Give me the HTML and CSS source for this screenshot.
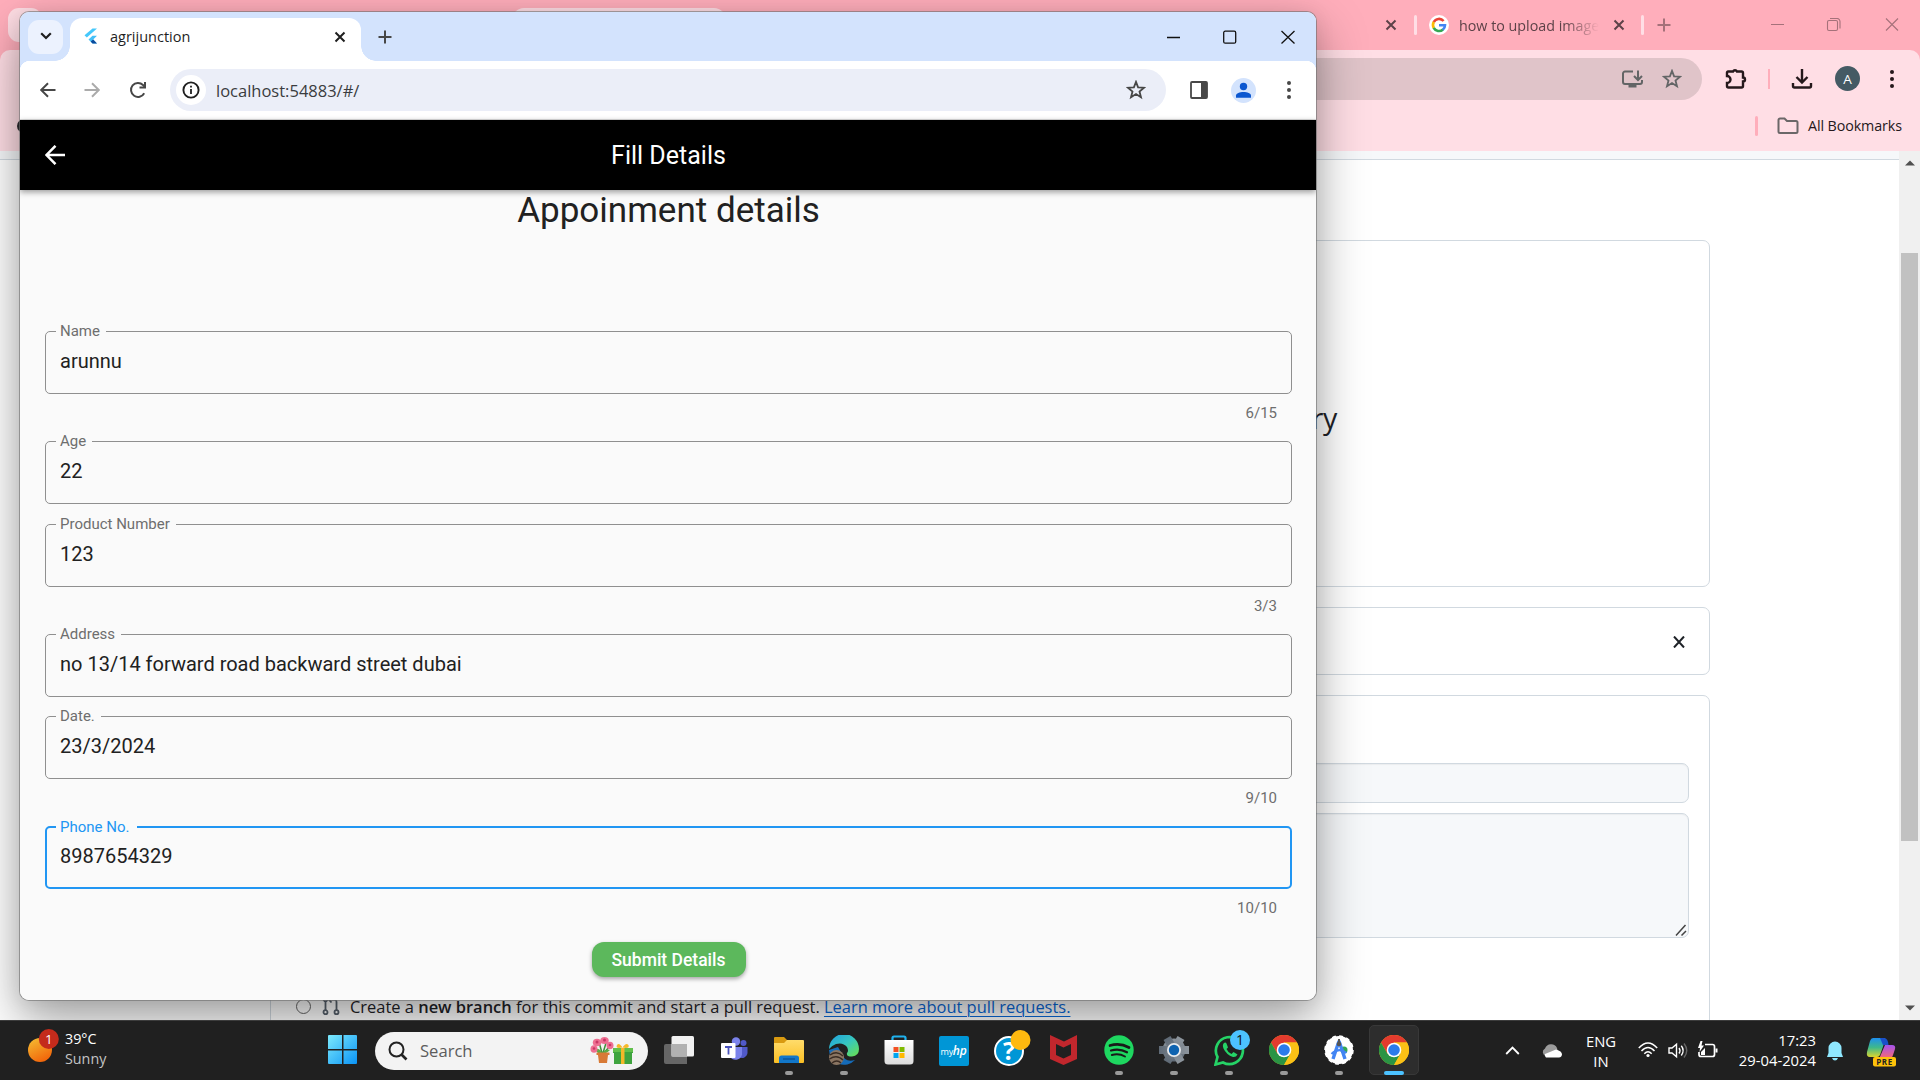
FILE: index.html
```html
<!DOCTYPE html>
<html lang="en">
<head>
<meta charset="utf-8">
<title>agrijunction</title>
<link rel="stylesheet" href="styles.css">
</head>
<body>
<svg class="defs" width="0" height="0">
  <defs>
    <linearGradient id="sun" x1="0" y1="0" x2=".5" y2="1"><stop offset="0" stop-color="#f5c033"/><stop offset="1" stop-color="#f2680c"/></linearGradient>
    <linearGradient id="win" x1="0" y1="0" x2="1" y2="1"><stop offset="0" stop-color="#7deafd"/><stop offset="1" stop-color="#0a93f5"/></linearGradient>
    <linearGradient id="folder" x1="0" y1="0" x2="0" y2="1"><stop offset="0" stop-color="#ffdc6b"/><stop offset="1" stop-color="#fbbf24"/></linearGradient>
    <linearGradient id="edge" x1="0" y1="0" x2="1" y2="1"><stop offset="0" stop-color="#1f9fe0"/><stop offset=".5" stop-color="#36c6c0"/><stop offset="1" stop-color="#6be04a"/></linearGradient>
    <linearGradient id="store" x1="0" y1="0" x2="0" y2="1"><stop offset="0" stop-color="#fff"/><stop offset="1" stop-color="#dcdcdc"/></linearGradient>
    <linearGradient id="gear" x1="0" y1="0" x2="0" y2="1"><stop offset="0" stop-color="#8d959d"/><stop offset="1" stop-color="#5f6a76"/></linearGradient>
    <linearGradient id="cop1" x1="0" y1="0" x2="0" y2="1"><stop offset="0" stop-color="#1e8ff0"/><stop offset=".5" stop-color="#3fb98a"/><stop offset="1" stop-color="#d9d52f"/></linearGradient>
    <linearGradient id="cop2" x1="0" y1="0" x2="0" y2="1"><stop offset="0" stop-color="#a452ee"/><stop offset="1" stop-color="#fb6a6a"/></linearGradient>
    <symbol id="chrome" viewBox="0 0 30 30">
      <circle cx="15" cy="15" r="15" fill="#fbc116"/>
      <path d="M15 7.5H28A15 15 0 0 0 2 7.5L8.5 18.8Z" fill="#e33b2e"/>
      <path d="M2 7.5A15 15 0 0 0 15 30L21.5 18.7 15 15 8.5 18.8Z" fill="#2a9444"/>
      <path d="M15 30A15 15 0 0 0 28 7.5H15L21.5 18.7Z" fill="#fbc116"/>
      <circle cx="15" cy="15" r="7.3" fill="#fff"/><circle cx="15" cy="15" r="5.8" fill="#2b7bea"/>
    </symbol>
    <symbol id="star" viewBox="0 0 20 20"><path d="M10 1.9 12.1 7.3 18 7.7 13.5 11.5 15 17.3 10 14.1 5 17.3 6.5 11.5 2 7.7 7.9 7.3Z" fill="none" stroke="currentColor" stroke-width="1.8"/></symbol>
    <symbol id="dots" viewBox="0 0 10 20"><g fill="currentColor"><circle cx="5" cy="3" r="2"/><circle cx="5" cy="10" r="2"/><circle cx="5" cy="17" r="2"/></g></symbol>
    <symbol id="cross" viewBox="0 0 12 12"><path d="M1.5 1.5 10.5 10.5M10.5 1.5 1.5 10.5" stroke="currentColor" stroke-width="2" fill="none"/></symbol>
    <symbol id="plus" viewBox="0 0 14 14"><path d="M7 .5V13.5M.5 7H13.5" stroke="currentColor" stroke-width="2" fill="none"/></symbol>
    <symbol id="arrow" viewBox="0 0 20 20"><path d="M17.5 10H3.5M10 3.2 3.2 10 10 16.8" stroke="currentColor" stroke-width="2" fill="none"/></symbol>
  </defs>
</svg>

<div class="desktop">
  <section class="back-window">
    <div class="back-tabs">
      <span class="back-search"></span>
      <span class="back-active-tab"></span>
      <svg class="bt-close1" width="12" height="12"><use href="#cross"/></svg>
      <i class="tab-sep"></i>
      <svg class="google" width="20" height="20" viewBox="0 0 20 20"><circle cx="10" cy="10" r="10" fill="#fff"/><g fill="none" stroke-width="2.6"><path d="M14.6 6A6 6 0 0 0 4.7 7.2" stroke="#ea4335"/><path d="M4.8 7A6 6 0 0 0 4.8 13" stroke="#fbbc05"/><path d="M4.7 12.8A6 6 0 0 0 14 14.5" stroke="#34a853"/><path d="M10 10.2H16A6 6 0 0 1 13.8 14.7" stroke="#4285f4"/></g></svg>
      <span class="bt-title">how to upload image</span>
      <svg class="bt-close2" width="12" height="12"><use href="#cross"/></svg>
      <i class="tab-sep sep2"></i>
      <svg class="bt-plus" width="14" height="14"><use href="#plus"/></svg>
      <svg class="bt-controls" width="128" height="14" viewBox="0 0 128 14" fill="none" stroke="#a5717a" stroke-width="1.1"><path d="M0 6.500H13M115 .5 127 12.500M127 .5 115 12.500"/><rect x="56.5" y="2.500" width="10" height="10" rx="1.5"/><path d="M59 .5H66A3 3 0 0 1 69 3.500V10.500"/></svg>
    </div>
    <div class="back-toolbar">
      <div class="back-nav">
        <div class="back-omnibox">
          <svg width="22" height="20" viewBox="0 0 22 20" fill="none" stroke="#636566" stroke-width="2"><path d="M12 2.5H4A2 2 0 0 0 2 4.500V13A2 2 0 0 0 4 15H19A2 2 0 0 0 21 13V11M17 1.500V10M13 7 17 11 21 7"/><path d="M7.500 17H15.500" stroke-width="3"/></svg>
          <svg width="20" height="20" color="#636566"><use href="#star"/></svg>
        </div>
        <svg class="ext" width="22" height="22" viewBox="0 0 22 22"><path d="M3 3.500H8A2.200 2.200 0 0 1 12 3.500H16.500A1.500 1.500 0 0 1 18 5V9.500A2 2 0 0 1 18 13.500V18A1.500 1.500 0 0 1 16.500 19.500H3.500A1.500 1.500 0 0 1 2 18V15A3.500 3.500 0 0 0 2 8V4.500A1 1 0 0 1 3 3.500Z" fill="none" stroke="#25181b" stroke-width="2.400"/></svg>
        <i class="nav-sep"></i>
        <svg class="dl" width="22" height="20" viewBox="0 0 22 20" fill="none" stroke="#25181b" stroke-width="2.400"><path d="M11 0V13M5.500 8 11 13.500 16.500 8M2 14V17A1.500 1.500 0 0 0 3.500 18.500H18.500A1.500 1.500 0 0 0 20 17V14"/></svg>
        <span class="avatar">A</span>
        <svg class="bdots" width="10" height="20"><use href="#dots"/></svg>
      </div>
      <div class="bookmarks">
        <svg class="globe" width="16" height="16" viewBox="0 0 16 16"><circle cx="8" cy="8" r="7" fill="#2b2b2e"/></svg>
        <i class="bm-sep"></i>
        <svg width="22" height="18" viewBox="0 0 22 18"><path d="M1.500 14.500V3A1.500 1.500 0 0 1 3 1.500H7.500L10 4H19A1.500 1.500 0 0 1 20.500 5.500V14.500A1.500 1.500 0 0 1 19 16H3A1.500 1.500 0 0 1 1.500 14.500Z" fill="none" stroke="#6b6768" stroke-width="2"/></svg>
        <span class="bm-text">All Bookmarks</span>
      </div>
    </div>
    <div class="back-body">
      <main class="repo">
        <div class="repo-head"></div>
        <div class="repo-col">
          <div class="card drop"><h2>ry</h2></div>
          <div class="card file"><svg width="12" height="12" viewBox="0 0 12 12"><path d="M1 .5 11 11.500M11 .5 1 11.500" stroke="#1f2328" stroke-width="2"/></svg></div>
          <div class="card commit">
            <div class="input"></div>
            <div class="textarea"><svg width="12" height="12" viewBox="0 0 12 12"><path d="M1 11.500 10.500 1M6.500 11.500 11 7" stroke="#444" stroke-width="1.500"/></svg></div>
            <div class="branch-row">
              <span class="radio"></span>
              <svg width="20" height="20" viewBox="0 0 20 20" fill="none" stroke="#59636e" stroke-width="1.800"><path d="M4.500 5V14M8 3.500H13A2.500 2.500 0 0 1 15.500 6V14M10.500 .5 7.800 3.500 10.500 6.500"/><circle cx="4.500" cy="3.200" r="2"/><circle cx="4.500" cy="16.200" r="2"/><circle cx="15.500" cy="16.200" r="2"/></svg>
              <span class="branch-text">Create a <b>new branch</b> for this commit and start a pull request. <a>Learn more about pull requests.</a></span>
            </div>
          </div>
        </div>
      </main>
      <div class="scrollbar">
        <svg width="10" height="6" viewBox="0 0 10 6"><path d="M0 5.500 5 .5 10 5.500Z" fill="#505050"/></svg>
        <span class="thumb"></span>
        <svg width="10" height="6" viewBox="0 0 10 6"><path d="M0 .5 5 5.500 10 .5Z" fill="#505050"/></svg>
      </div>
    </div>
  </section>

  <section class="front-window">
    <div class="front-tabs">
      <span class="tab-menu"><svg width="12" height="8" viewBox="0 0 12 8"><path d="M1.200 1.200 6 6 10.800 1.200" fill="none" stroke="#1f1f1f" stroke-width="2.200"/></svg></span>
      <div class="tab">
        <svg width="14" height="17" viewBox="0 0 14 17"><path d="M8.500 .5H13L2.800 9.500 .5 7.200Z" fill="#45c8fb"/><path d="M8.500 7.800H13L9.200 11.500 13 15.500H8.500L4.500 11.500Z" fill="#45c0f8"/><path d="M6.700 13.600 9.200 11.500 13 15.500H8.500Z" fill="#0b4a9c"/></svg>
        <span class="tab-title">agrijunction</span>
        <svg class="tab-x" width="12" height="12"><use href="#cross"/></svg>
      </div>
      <svg class="new-tab" width="14" height="14"><use href="#plus"/></svg>
      <svg class="controls" width="128" height="14" viewBox="0 0 128 14" fill="none" stroke="#111" stroke-width="1.300"><path d="M0 7.500H13M114.500 1 127.500 13.500M127.500 1 114.500 13.500"/><rect x="56.700" y="1.200" width="12" height="12" rx="1.500"/></svg>
    </div>
    <div class="front-toolbar">
      <svg class="fb" width="20" height="20"><use href="#arrow"/></svg>
      <svg class="ff" width="20" height="20"><use href="#arrow"/></svg>
      <svg class="fr" width="20" height="20" viewBox="0 0 20 20" fill="none" stroke="#474747" stroke-width="2"><path d="M16.200 13.200A7 7 0 1 1 15 5L16.500 6.500"/><path d="M17 2V7.500H11.500"/></svg>
      <div class="omnibox">
        <span class="info"><svg width="18" height="18" viewBox="0 0 18 18"><circle cx="9" cy="9" r="7.600" fill="none" stroke="#1f1f1f" stroke-width="1.900"/><path d="M9 8V13M9 4.700V6.500" stroke="#1f1f1f" stroke-width="1.800"/></svg></span>
        <span class="url">localhost:54883/#/</span>
        <svg width="20" height="20" color="#474747"><use href="#star"/></svg>
      </div>
      <svg class="panel" width="20" height="20" viewBox="0 0 20 20"><rect x="2" y="2" width="16" height="16" rx="1" fill="#fff" stroke="#474747" stroke-width="1.800"/><path d="M12 2H18V18H12Z" fill="#474747"/></svg>
      <svg class="profile" width="25" height="25" viewBox="0 0 25 25"><circle cx="12.500" cy="12.500" r="12.500" fill="#d3e3fd"/><circle cx="12.500" cy="8.500" r="3.700" fill="#0b57d0"/><path d="M5 19.800V17.500C5 12.800 20 12.800 20 17.500V19.800Z" fill="#0b57d0"/></svg>
      <svg class="fdots" width="10" height="20"><use href="#dots"/></svg>
    </div>
    <header class="appbar">
      <svg width="20" height="20" viewBox="0 0 20 20"><path d="M20 10H2M10.500 .8 1.500 10 10.500 19.200" fill="none" stroke="#fff" stroke-width="2.500"/></svg>
      <h1>Fill Details</h1>
    </header>
    <form class="form">
      <h2 class="form-title">Appoinment details</h2>
      <div class="field counted"><div class="box"><label>Name</label><span>arunnu</span></div><small>6/15</small></div>
      <div class="field"><div class="box"><label>Age</label><span>22</span></div></div>
      <div class="field counted"><div class="box"><label>Product Number</label><span>123</span></div><small>3/3</small></div>
      <div class="field"><div class="box"><label>Address</label><span>no 13/14 forward road backward street dubai</span></div></div>
      <div class="field counted"><div class="box"><label>Date.</label><span>23/3/2024</span></div><small>9/10</small></div>
      <div class="field counted focused"><div class="box"><label>Phone No.</label><span>8987654329</span></div><small>10/10</small></div>
      <div class="submit">Submit Details</div>
    </form>
  </section>

  <footer class="taskbar">
    <div class="weather">
      <svg width="32" height="34" viewBox="0 0 32 34"><circle cx="12" cy="21" r="12" fill="url(#sun)"/><circle cx="20.800" cy="10" r="10" fill="#c42b1c"/><text x="20.800" y="15" text-anchor="middle" font-size="13.500" fill="#fff" font-family="Open Sans, sans-serif">1</text></svg>
      <div><span>39°C</span><span class="dim">Sunny</span></div>
    </div>
    <div class="apps">
      <span class="app start"><svg width="30" height="30" viewBox="0 0 30 30"><path d="M0 1Q0 0 1 0H14V14H0ZM15.500 0H28Q29 0 29 1V14H15.500ZM0 15.500H14V29H1Q0 29 0 28ZM15.500 15.500H29V28Q29 29 28 29H15.500Z" fill="url(#win)"/></svg></span>
      <div class="search">
        <svg width="20" height="20" viewBox="0 0 20 20" fill="none" stroke="#222" stroke-width="2"><circle cx="8.500" cy="8.500" r="7"/><path d="M13.500 13.500 18.500 18.500" stroke-width="2.600"/></svg>
        <span>Search</span>
        <svg class="gift" width="44" height="28" viewBox="0 0 44 28"><path d="M9 5 12 16M16 6 13 16M5 12 12 17M20 9 13 17" stroke="#3f8f3a" stroke-width="1.500" fill="none"/><path d="M5 12Q10 11 12 16Q16 11 20 13Q16 17 12 17Q7 17 5 12Z" fill="#5cab47"/><g fill="#ee6f92"><ellipse cx="7" cy="5.500" rx="4.200" ry="3.800"/><ellipse cx="14.500" cy="3.500" rx="4.200" ry="3.500"/><ellipse cx="4" cy="12" rx="3.500" ry="3.800"/><ellipse cx="20" cy="8.500" rx="3.500" ry="3.800"/></g><g fill="#c93765"><circle cx="7" cy="5" r="1.500"/><circle cx="14.500" cy="3" r="1.500"/><circle cx="4" cy="11.500" r="1.300"/><circle cx="20" cy="8" r="1.300"/></g><path d="M6.500 15.500H19.500V18H18L17 26H9L8 18H6.500Z" fill="#d87a36"/><path d="M23 11H43V16H42V27H24V16H23Z" fill="#3fa43f"/><path d="M23 11H43V15H23Z" fill="#62c04c"/><path d="M31 11H34.500V27H31ZM32.500 10.500Q25 12 27 8Q29 5 32.500 10.500Q36 5 38.500 8Q40 12 32.500 10.500Z" fill="#f5b829"/></svg>
      </div>
      <span class="app first"><svg width="30" height="28" viewBox="0 0 30 28"><path d="M2 8H23V28H2Q0 28 0 26V10Q0 8 2 8Z" fill="#666"/><rect x="7.500" width="22.500" height="20.500" rx="1.500" fill="#f1f1f1"/><path d="M7.500 8H23V20.500H7.500Z" fill="#b1b1b1"/></svg></span>
      <span class="app"><svg width="28" height="26" viewBox="0 0 28 26"><circle cx="23.500" cy="6" r="3" fill="#5059c9"/><circle cx="16" cy="4.500" r="4.200" fill="#7b83eb"/><path d="M19 10H27.500V16A5.500 5.500 0 0 1 19 20Z" fill="#5059c9"/><path d="M10 10H22V17.500A6.500 6.500 0 0 1 10 19.500Z" fill="#7b83eb"/><rect x="1" y="6" width="14.500" height="15" rx="1" fill="#fff"/><path d="M5 10H12M8.500 10V17.500" stroke="#4b53bc" stroke-width="1.800"/></svg></span>
      <span class="app run"><svg width="30" height="28" viewBox="0 0 30 28"><path d="M0 2Q0 1 1 1H10L13 4V8H0Z" fill="#d99a10"/><path d="M0 7H10L13 4H29Q30 4 30 5V26Q30 27 29 27H1Q0 27 0 26Z" fill="url(#folder)"/><path d="M5 27V22Q5 19.500 7.500 19.500H22.500Q25 19.500 25 22V27Z" fill="#1277c9"/><path d="M9 23H21" stroke="#0a4f92" stroke-width="1.300"/></svg></span>
      <span class="app run"><svg width="30" height="30" viewBox="0 0 30 30"><path d="M0 15A15 15 0 0 0 26 25Q16 28 13 19L9 12Z" fill="#156bb8"/><path d="M0 14A15 15 0 0 1 30 14Q30 21 23 21.500Q17 21.500 18 18Q20 16 18 12Q14 7 7 9Q2 11 0 14Z" fill="url(#edge)"/><circle cx="7.500" cy="22.500" r="7.500" fill="#8a7562"/><path d="M1 20Q8 15 14 21M.5 24Q8 19 14 25M3 28Q8 24 12 28" stroke="#3a2c23" stroke-width="1.500" fill="none"/></svg></span>
      <span class="app"><svg width="30" height="30" viewBox="0 0 30 30"><path d="M8.500 6V3Q8.500 1.500 10 1.500H20Q21.500 1.500 21.500 3V6" fill="none" stroke="#1fb2ee" stroke-width="2.200"/><path d="M.5 5H29.500V26Q29.500 29.500 26 29.500H4Q.5 29.500 .5 26Z" fill="url(#store)"/><path d="M9.500 12H14.500V17H9.500Z" fill="#f25022"/><path d="M15.500 12H20.500V17H15.500Z" fill="#7fba00"/><path d="M9.500 18H14.500V23H9.500Z" fill="#00a4ef"/><path d="M15.500 18H20.500V23H15.500Z" fill="#ffb900"/></svg></span>
      <span class="app"><span class="myhp">my<em>hp</em></span></span>
      <span class="app"><svg class="lift" width="38" height="36" viewBox="0 0 38 36"><circle cx="15" cy="21" r="14" fill="#0096d6" stroke="#fff" stroke-width="2"/><text x="15" y="30" text-anchor="middle" font-size="25" font-weight="700" fill="#fff" font-family="Open Sans, sans-serif">?</text><circle cx="26.500" cy="10" r="10" fill="#ffb90f"/></svg></span>
      <span class="app"><svg width="28" height="30" viewBox="0 0 28 30"><path d="M0 0 14 6.500 27 0V24L13.500 30 0 24ZM6 9V20L13.500 23.500 21 20V9L13.500 12.500Z" fill="#c1272d" fill-rule="evenodd"/></svg></span>
      <span class="app run"><svg width="30" height="30" viewBox="0 0 30 30"><circle cx="15" cy="15" r="14.700" fill="#1ed760"/><g fill="none" stroke="#191919" stroke-linecap="round"><path d="M6 10.500Q16 7.500 25 12.500" stroke-width="2.700"/><path d="M7 15.500Q15.500 13 23 17.300" stroke-width="2.200"/><path d="M7.800 20Q15 18 21 21.500" stroke-width="1.900"/></g></svg></span>
      <span class="app run"><svg width="30" height="30" viewBox="0 0 30 30"><g fill="url(#gear)"><circle cx="15" cy="15" r="11.500"/><path d="M11 1H19V29H11Z" transform="rotate(30 15 15)"/><path d="M11 0H19V30H11Z" transform="rotate(90 15 15)"/><path d="M11 1H19V29H11Z" transform="rotate(150 15 15)"/></g><circle cx="15" cy="15" r="7" fill="#e8ebee"/><circle cx="15" cy="15" r="5.200" fill="#0e63b0"/></svg></span>
      <span class="app run"><svg class="lift" width="38" height="36" viewBox="0 0 38 36"><path d="M1.500 34.500 3.500 27A13.500 13.500 0 1 1 9 32.500Z" fill="none" stroke="#25d366" stroke-width="2.700"/><path d="M10 13Q8 15 9.500 18.500Q12.500 25 19 27Q22 27.500 23.500 24.500L19.500 22 17.500 24Q14 22.500 12.500 19L14 17.500 12.500 13.500Q11.500 12 10 13Z" fill="#25d366"/><circle cx="26" cy="10" r="10" fill="#4cc2ff"/><text x="26" y="15" text-anchor="middle" font-size="14" fill="#111" font-family="Open Sans, sans-serif">1</text></svg></span>
      <span class="app run"><svg width="30" height="30"><use href="#chrome"/></svg></span>
      <span class="app run"><svg width="30" height="30" viewBox="0 0 30 30"><circle cx="15" cy="15" r="14" fill="#fff"/><circle cx="15" cy="15" r="14" fill="none" stroke="#fff" stroke-width="1.500" stroke-dasharray="4 3.300"/><circle cx="20" cy="15" r="3.500" fill="#34a853"/><path d="M15 6 9 24M15 6 21 24" stroke="#4285f4" stroke-width="3.400"/><path d="M7.500 19Q15 12 22.500 18" fill="none" stroke="#4285f4" stroke-width="2.200"/><circle cx="15" cy="9" r="2.300" fill="#555"/><path d="M15 4V8" stroke="#555" stroke-width="2"/></svg></span>
      <span class="app run active"><svg width="30" height="30"><use href="#chrome"/></svg></span>
    </div>
    <div class="tray">
      <svg class="t-chev" width="15" height="10" viewBox="0 0 15 10"><path d="M1.200 8 7.500 1.500 13.800 8" fill="none" stroke="#fff" stroke-width="1.800"/></svg>
      <svg class="t-cloud" width="20" height="14" viewBox="0 0 20 14"><path d="M4 12A4 4 0 0 1 3 4.500 6.500 6.500 0 0 1 15 4L16 8 5 13Z" fill="#9b9b9b"/><path d="M4 13.500A3.500 3.500 0 0 1 3 10L14 5.500Q20 7 20 10.500Q19.500 13.500 17 13.500Z" fill="#fff"/></svg>
      <div class="lang"><span>ENG</span><span>IN</span></div>
      <svg class="t-wifi" width="20" height="16" viewBox="0 0 20 16" fill="none" stroke="#fff" stroke-width="1.500"><path d="M.8 6Q10-4 19.200 6M3.500 9Q10 2 16.500 9M6.300 11.700Q10 8 13.700 11.700"/><circle cx="10" cy="13.500" r="1.600" fill="#fff" stroke="none"/></svg>
      <svg class="t-vol" width="20" height="17" viewBox="0 0 20 17" fill="none" stroke="#fff" stroke-width="1.400"><path d="M1 6V11H4L8.500 14.800V2.200L4 6ZM11 6Q13 8.500 11 11.500M13.300 3.800Q17 8.500 13.300 13.500"/><path d="M16 1.500Q21.500 8.500 16 15.500" stroke="#666"/></svg>
      <svg class="t-bat" width="21" height="18" viewBox="0 0 21 18"><path d="M8 3.500H15.500A2 2 0 0 1 17.500 5.500V13.500A2 2 0 0 1 15.500 15.500H4A2 2 0 0 1 2 13.500V11" fill="none" stroke="#fff" stroke-width="1.700"/><path d="M18.500 7.500H20.500V11.500H18.500ZM4 11 8 7V14H4ZM3.500 0 1 7H3L2.500 11 7 4.500H4.500L5.500 0Z" fill="#fff"/></svg>
      <div class="clock"><span>17:23</span><span>29-04-2024</span></div>
      <svg class="t-bell" width="16" height="20" viewBox="0 0 16 20"><path d="M8 .5A6.500 6.500 0 0 1 14.500 7V12L16 16H0L1.500 12V7A6.500 6.500 0 0 1 8 .5ZM5 17H11Q10 19.500 8 19.500Q6 19.500 5 17Z" fill="#8fe8ff"/></svg>
      <svg class="t-cop" width="30" height="30" viewBox="0 0 30 30"><path d="M7 1H18Q20 1 19 4L14 18Q13 20 11 20H4Q0 20 1 15L4 4Q5 1 7 1Z" fill="url(#cop1)"/><path d="M14 1H18Q22 1 22.500 8H17Z" fill="#1a50c8"/><path d="M19 8H26Q30 8 29 12L27 18Q26 22 22 22H13Z" fill="url(#cop2)"/><rect x="7" y="20" width="23" height="9.500" rx="2" fill="#ffc20a"/><text x="18.500" y="27.600" text-anchor="middle" font-size="8" font-weight="700" fill="#222" letter-spacing=".5" font-family="Open Sans, sans-serif">PRE</text></svg>
    </div>
  </footer>
</div>
</body>
</html>
```

FILE: styles.css
```css
* { box-sizing: border-box; }
body { margin: 0; width: 1920px; height: 1080px; overflow: hidden; font-family: "Open Sans", "Noto Sans", sans-serif; }
.defs { position: absolute; }
svg { display: block; flex: none; }
h1, h2 { margin: 0; font-weight: 400; }

.desktop { position: relative; height: 1080px; display: flex; flex-direction: column; }

/* background browser window */
.back-window { height: 1020px; display: flex; flex-direction: column; background: #ffaebb; overflow: hidden; }
.back-tabs { height: 50px; flex: none; display: flex; align-items: center; color: #5d4248; }
.back-search { width: 34px; height: 34px; margin-left: 8px; border-radius: 11px; background: #ffdee5; }
.back-active-tab { width: 214px; height: 42px; margin-left: 470px; align-self: flex-end; border-radius: 12px 12px 0 0; background: #ffdee5; }
.bt-close1 { margin-left: 659px; }
.tab-sep { width: 3px; height: 20px; margin-left: 17px; border-radius: 2px; background: #ffdee5; }
.google { margin-left: 12px; }
.bt-title { width: 140px; margin-left: 10px; overflow: hidden; white-space: nowrap; font-size: 14.3px; line-height: 22px; margin-top: 1px; -webkit-mask-image: linear-gradient(90deg, #000 75%, transparent); mask-image: linear-gradient(90deg, #000 75%, transparent); }
.bt-close2 { margin-left: 14px; }
.sep2 { margin-left: 16px; }
.bt-plus { margin-left: 13px; color: #a5717a; }
.bt-controls { margin-left: 100px; }

.back-toolbar { height: 101px; flex: none; background: #ffdee5; border-radius: 10px 10px 0 0; padding-top: 8px; }
.back-nav { height: 42px; display: flex; align-items: center; }
.back-omnibox { width: 1542px; height: 42px; margin-left: 160px; border-radius: 21px; background: #e0c4c9; display: flex; align-items: center; justify-content: flex-end; gap: 19px; padding-right: 20px; }
.ext { margin-left: 23px; }
.nav-sep { width: 2px; height: 20px; margin-left: 21px; background: #ffaebb; }
.dl { margin: 0 0 1px 21px; }
.avatar { width: 25px; height: 25px; margin: 0 0 1px 22px; border-radius: 50%; background: #455a64; color: #fff; text-align: center; font: 13.5px/26px "Open Sans", sans-serif; }
.bdots { margin: 0 0 1px 27px; color: #25181b; }
.bookmarks { display: flex; align-items: center; height: 30px; margin-top: 11px; padding-left: 16px; }
.bm-sep { width: 3px; height: 20px; margin-left: 1723px; margin-right: 19px; border-radius: 2px; background: #ffaebb; }
.bm-text { margin-left: 9px; font-size: 14.3px; line-height: 22px; color: #25181b; white-space: nowrap; letter-spacing: -.1px; }

.back-body { flex: 1; display: flex; min-height: 0; }
.repo { flex: 1; background: #fff; overflow: hidden; }
.repo-head { height: 9px; background: #f6f8fa; border-bottom: 1px solid #d1d9e0; }
.repo-col { width: 1440px; margin: 80px 0 0 270px; display: flex; flex-direction: column; gap: 20px; }
.card { border: 1px solid #d1d9e0; border-radius: 7px; }
.drop { height: 347px; padding-top: 155px; display: flex; justify-content: flex-end; padding-right: 372px; }
.drop h2 { font-size: 28.5px; line-height: 44px; color: #1f2328; white-space: nowrap; letter-spacing: -.3px; }
.file { height: 68px; display: flex; align-items: center; justify-content: flex-end; padding: 2px 24px 0 0; }
.commit { height: 500px; padding: 67px 20px 0 80px; }
.input { height: 40px; border: 1px solid #d1d9e0; border-radius: 7px; background: #f6f8fa; box-shadow: inset 0 1px 1px rgba(31,35,40,.05); }
.textarea { height: 125px; margin-top: 10px; border: 1px solid #d1d9e0; border-radius: 7px; background: #f6f8fa; display: flex; align-items: flex-end; justify-content: flex-end; padding: 0 1px 1px 0; box-shadow: inset 0 1px 1px rgba(31,35,40,.05); }
.branch-row { display: flex; align-items: center; margin: 55px 0 0 -55px; height: 26px; }
.radio { width: 15px; height: 15px; border: 1.5px solid #666; border-radius: 50%; }
.branch-row svg { margin-left: 10px; }
.branch-text { margin: 2px 0 0 9px; font-size: 16.44px; line-height: 26px; color: #1f2328; white-space: nowrap; }
.branch-text b { font-weight: 600; }
.branch-text a { color: #0969da; text-decoration: underline; text-underline-offset: 3px; text-decoration-thickness: 1px; }

.scrollbar { width: 21px; background: #f0f0f0; display: flex; flex-direction: column; align-items: center; justify-content: space-between; padding: 9px 0; }
.thumb { width: 17px; height: 588px; margin-bottom: 78px; background: #c1c1c1; }

/* foreground browser window */
.front-window { position: absolute; left: 19px; top: 11px; width: 1298px; height: 990px; border: 1px solid rgba(110,110,110,.6); border-radius: 10px; background: #fafafa; background-clip: padding-box; overflow: hidden; box-shadow: 0 20px 50px rgba(0,0,0,.36), 0 2px 20px rgba(0,0,0,.08); display: flex; flex-direction: column; }
.front-tabs { height: 49px; flex: none; background: #d3e3fd; display: flex; align-items: center; color: #1f1f1f; }
.tab-menu { width: 35px; height: 34px; margin-left: 8px; border-radius: 11px; background: #ecf2fe; display: grid; place-items: center; padding-bottom: 1px; }
.tab { position: relative; width: 291px; height: 43px; margin-left: 7px; align-self: flex-end; border-radius: 12px 12px 0 0; background: #fff; display: flex; align-items: center; padding: 0 15px 6px 14px; }
.tab::before, .tab::after { content: ""; position: absolute; bottom: 0; width: 15px; height: 15px; }
.tab::before { left: -15px; background: radial-gradient(circle at 0 0, transparent 14.5px, #fff 15px); }
.tab::after { right: -15px; background: radial-gradient(circle at 100% 0, transparent 14.5px, #fff 15px); }
.tab-title { margin-left: 12px; font-size: 14.5px; line-height: 22px; }
.tab-x { margin-left: auto; }
.new-tab { margin-left: 17px; color: #474747; }
.controls { margin-left: 775px; }
.front-toolbar { height: 59px; flex: none; display: flex; align-items: center; border-bottom: 1px solid #dedede; color: #474747; background: radial-gradient(circle at 10px 10px, #fff 10px, #d3e3fd 10.5px) 0 0 / 10px 10px no-repeat, radial-gradient(circle at 0 10px, #fff 10px, #d3e3fd 10.5px) 100% 0 / 10px 10px no-repeat, #fff; }
.fb { margin-left: 18px; }
.ff { margin-left: 24px; transform: scaleX(-1); color: #ababab; }
.fr { margin-left: 26px; }
.omnibox { width: 996px; height: 42px; margin-left: 22px; border-radius: 21px; background: #ebeef8; display: flex; align-items: center; padding: 0 20px 0 6px; }
.info { width: 30px; height: 30px; border-radius: 50%; background: #fff; display: grid; place-items: center; }
.url { flex: 1; margin: 1px 0 0 10px; font-size: 16.5px; line-height: 24px; color: #3a3c40; }
.panel { margin-left: 23px; }
.profile { margin-left: 22px; }
.fdots { margin-left: 28px; }

.appbar { position: relative; height: 70px; flex: none; background: #000; display: flex; align-items: center; padding: 0 44px 0 25px; box-shadow: 0 2px 6px rgba(0,0,0,.4); font-family: Roboto, sans-serif; }
.appbar h1 { flex: 1; margin-top: 2px; text-align: center; color: #fff; font-size: 25px; line-height: 30px; }
.form { flex: 1; padding: 0 24px 0 25px; background: #fafafa; font-family: Roboto, sans-serif; display: flex; flex-direction: column; }
.form-title { height: 141px; font-size: 35px; line-height: 42px; text-align: center; color: #212121; }
.field { height: 82.5px; flex: none; }
.field.counted { height: 110px; }
.box { position: relative; height: 63px; border: 1px solid #8f8f8f; border-radius: 5px; padding: 16px 14px; }
.box label { position: absolute; left: 10px; top: -10px; padding: 0 6px 0 4px; background: #fafafa; font-size: 15px; line-height: 18px; color: #6e6e6e; }
.box span { display: block; font-size: 20px; line-height: 26px; color: #212121; white-space: nowrap; }
.field small { display: block; padding-right: 15px; margin-top: 10px; text-align: right; font-size: 15px; line-height: 18px; color: #6e6e6e; }
.focused .box { margin-top: -.5px; height: 63.5px; border: 2px solid #2196f3; padding: 15px 13px; }
.focused .box label { left: 9px; padding-right: 8px; color: #2196f3; }
.submit { align-self: center; width: 154px; height: 35px; margin-top: 6px; border-radius: 12px; background: #5cb85c; color: #fff; font-size: 17.5px; font-weight: 500; line-height: 37px; text-align: center; box-shadow: 0 2px 4px rgba(0,0,0,.35); }

/* taskbar */
.taskbar { position: relative; height: 60px; background: #202020; border-top: 1px solid #3c3c3c; display: flex; align-items: center; color: #fff; }
.weather { width: 287px; padding-left: 28px; display: flex; gap: 5px; font-size: 14.3px; line-height: 20px; margin-top: -3px; }
.weather svg { margin-top: 0; }
.weather span { display: block; }
.weather .dim { color: #c4c4c4; }
.apps { display: flex; align-items: center; margin-left: 27px; }
.app { position: relative; width: 55px; height: 59px; display: grid; place-items: center; }
.app > svg { margin-bottom: 1px; }
.start { margin-left: 1px; }
.search { width: 273px; height: 38px; margin: 0 3px 0 5px; border-radius: 19px; background: #f3f3f3; display: flex; align-items: center; padding: 0 14px 0 13px; color: #5c5c5c; font-size: 16.6px; }
.search span { margin-left: 12px; flex: 1; }
.run::after { content: ""; position: absolute; bottom: 5px; left: 23.5px; width: 8px; height: 4px; border-radius: 2px; background: #9a9a9a; }
.active::before { content: ""; position: absolute; inset: 4px 2.5px 5px; border: 1px solid #383838; border-radius: 5px; background: #2d2d2d; }
.active svg { position: relative; }
.active::after { left: 17.5px; width: 20px; background: #4cc2ff; }
.app > .lift { margin: -6px 0 0 8px; }
.myhp { width: 30px; height: 30px; border-radius: 2px; background: #0096d6; font-size: 9px; line-height: 29px; text-align: center; letter-spacing: -.3px; }
.myhp em { font-size: 12px; font-weight: 600; }
.tray { flex: 1; display: flex; align-items: center; font-size: 14.8px; line-height: 20px; }
.tray span { display: block; }
.t-chev { margin-left: 84px; }
.t-cloud { margin-left: 22px; }
.lang { width: 40px; margin-left: 19px; text-align: center; }
.t-wifi { margin: 0 0 2px 17px; }
.t-vol { margin: 0 0 1px 10px; }
.t-bat { margin: 0 0 2px 9px; }
.clock { width: 86px; margin: -2px 0 0 12px; white-space: nowrap; display: flex; flex-direction: column; align-items: flex-end; }
.t-bell { margin-left: 11px; }
.t-cop { margin-left: 23px; margin-top: 2px; }
```
